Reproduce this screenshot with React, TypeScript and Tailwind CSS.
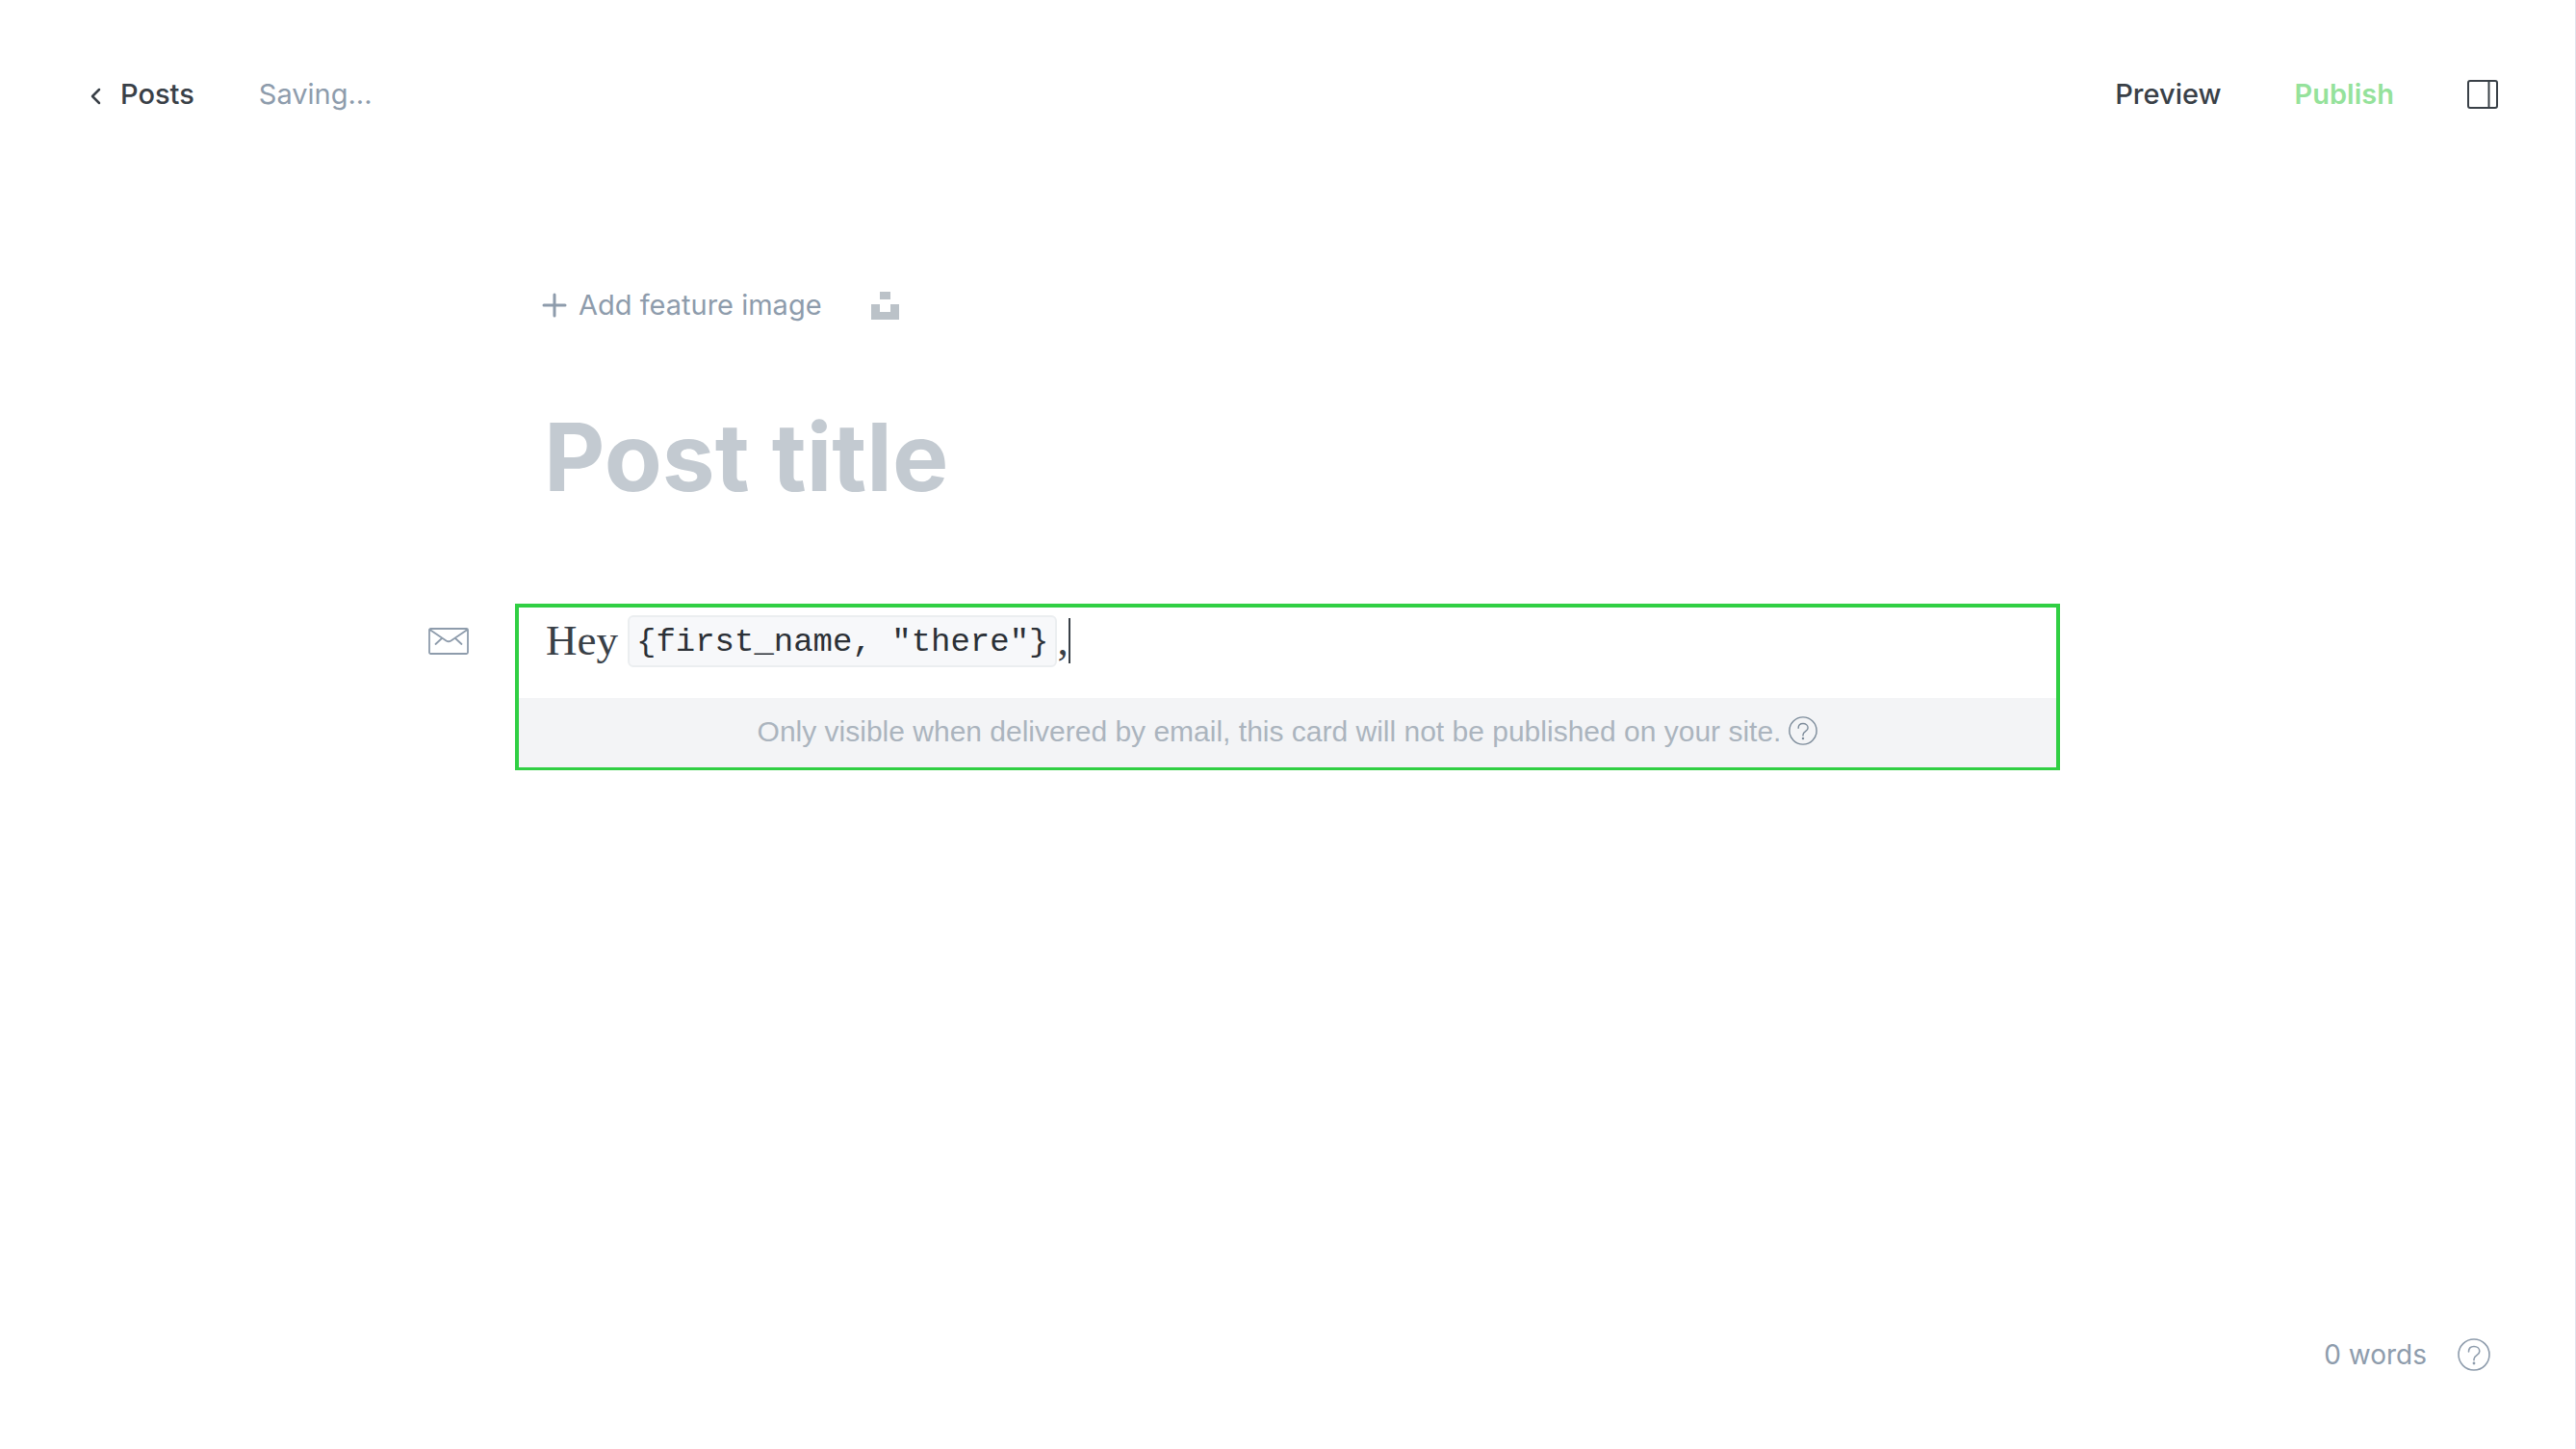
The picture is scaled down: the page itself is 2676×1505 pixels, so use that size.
import React from "react";

function HelpIcon({ className }: { className: string }) {
  return (
    <svg viewBox="0 0 34 34" fill="none" stroke="currentColor" strokeWidth="1.6" className={className} aria-hidden="true">
      <circle cx="17" cy="17" r="16" />
      <path d="M11.500 14C11.500 10.500 13.800 8.500 17 8.500s5.800 2 5.800 5c0 4.500-5.800 3.800-5.800 8.200v1" strokeLinecap="round" />
      <circle cx="17" cy="26" r="1.400" fill="currentColor" stroke="none" />
    </svg>
  );
}

function Header() {
  return (
    <header className="flex items-center justify-between pl-[93px] pr-20 pt-20 text-[29px] leading-9">
      <div className="flex items-center gap-[67px]">
        <a href="#posts" className="flex items-center gap-5 font-medium text-[#394047]">
          <svg viewBox="0 0 12 18" fill="none" stroke="currentColor" strokeWidth="2.500" strokeLinecap="round" strokeLinejoin="round" className="mt-1 h-[18px] w-3" aria-hidden="true">
            <path d="M10 2 3 9l7 7" />
          </svg>
          Posts
        </a>
        <span className="text-[#8e9cac]">Saving...</span>
      </div>
      <div className="flex items-center gap-[76px]">
        <button type="button" className="font-medium text-[#394047]">Preview</button>
        <button type="button" className="font-semibold text-[#95e29b]">Publish</button>
        <button type="button" aria-label="Settings" className="text-[#394047]">
          <svg viewBox="0 0 32 30" fill="none" stroke="currentColor" strokeWidth="2" className="h-[30px] w-8" aria-hidden="true">
            <rect x="1" y="1" width="30" height="28" rx="2" />
            <path d="M22.500 1v28" />
          </svg>
        </button>
      </div>
    </header>
  );
}

function FeatureImageBar() {
  return (
    <div className="flex items-center gap-[51px] text-[29px] leading-9">
      <button type="button" className="flex items-center gap-3 text-[#8e9cac]">
        <svg viewBox="0 0 26 26" fill="none" stroke="currentColor" strokeWidth="3" strokeLinecap="round" className="size-[26px]" aria-hidden="true">
          <path d="M13 2v22M2 13h22" />
        </svg>
        Add feature image
      </button>
      <button type="button" aria-label="Unsplash" className="text-[#bbc2c8]">
        <svg viewBox="0 0 29 29" fill="currentColor" className="size-[29px]" aria-hidden="true">
          <path d="M9 0h11v8H9zM0 13h9v8h11v-8h9v16H0z" />
        </svg>
      </button>
    </div>
  );
}

function EmailCard() {
  return (
    <div className="relative border-4 border-b-3 border-[#30cf43]">
      <svg viewBox="0 0 42 28" fill="none" stroke="#8e9cac" strokeWidth="1.800" strokeLinecap="round" strokeLinejoin="round" className="absolute top-[21px] -left-[94px] h-7 w-[42px]" aria-hidden="true">
        <rect x="1" y="1" width="40" height="26" rx="1.500" />
        <path d="M1.500 2 18.500 13.500q2.500 1.500 5 0L40.500 2M14 11l-6.500 6M28 11l6.500 6" />
      </svg>
      <p className="flex h-[94px] items-start px-7 pt-2 font-['Liberation_Serif',serif] text-[45px] leading-[52px] text-[#394047]">
        <span>Hey</span>
        <code className="ml-2.5 h-[54px] rounded-md border-2 border-[#ebeef0] bg-[#f7f8fa] px-[7px] font-['Liberation_Mono',monospace] text-[34px] text-[#2b3036]">
          {'{first_name, "there"}'}
        </code>
        <span>,</span>
        <span className="mt-[3px] h-[47px] w-0.5 bg-[#394047]" />
      </p>
      <div className="flex h-[72px] items-center justify-center gap-2 bg-[#f3f4f6] pb-1 font-['Liberation_Sans',sans-serif] text-[30px] text-[#abb4be]">
        <span>Only visible when delivered by email, this card will not be published on your site.</span>
        <button type="button" aria-label="About email cards" className="text-[#7c8b9a]">
          <HelpIcon className="size-[30px]" />
        </button>
      </div>
    </div>
  );
}

export default function App() {
  return (
    <div className="flex min-h-screen flex-col border-r border-[#dfe1ec] bg-white font-['Inter',sans-serif]">
      <Header />
      <main className="mx-auto w-full max-w-[1605px] flex-1 pt-[183px]">
        <div className="px-7">
          <FeatureImageBar />
          <input
            type="text"
            aria-label="Post title"
            placeholder="Post title"
            className="mt-[74px] mb-[88px] block h-[130px] w-full pl-0.5 text-[98px] font-bold text-[#394047] outline-none placeholder:text-[#c3cad1]"
          />
        </div>
        <EmailCard />
      </main>
      <footer className="flex items-center justify-end gap-8 pr-[88px] pb-20 text-[28px] leading-9 text-[#8e9cac]">
        <span>0 words</span>
        <button type="button" aria-label="Help">
          <HelpIcon className="size-[34px]" />
        </button>
      </footer>
    </div>
  );
}
